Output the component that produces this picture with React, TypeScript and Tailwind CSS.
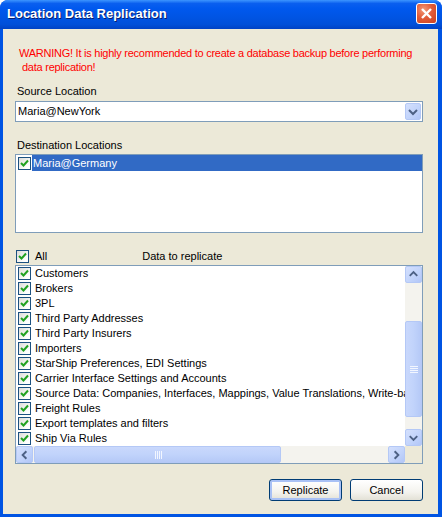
import React from 'react';

const items = [
  'Customers',
  'Brokers',
  '3PL',
  'Third Party Addresses',
  'Third Party Insurers',
  'Importers',
  'StarShip Preferences, EDI Settings',
  'Carrier Interface Settings and Accounts',
  'Source Data: Companies, Interfaces, Mappings, Value Translations, Write-back',
  'Freight Rules',
  'Export templates and filters',
  'Ship Via Rules',
];

function CheckBox() {
  return (
    <span className="w-[13px] h-[13px] shrink-0 border border-[#1c5180] bg-[linear-gradient(135deg,#dcdcd7_0%,#ffffff_80%)] flex items-center justify-center">
      <svg width="9" height="9" viewBox="0 0 9 9">
        <path d="M1 4 L3.5 6.5 L8 1.5" stroke="#21a121" strokeWidth="2" fill="none" />
      </svg>
    </span>
  );
}

function ArrowButton({ dir }: { dir: 'up' | 'down' | 'left' | 'right' }) {
  const paths = {
    up: 'M4 9 L8 5 L12 9',
    down: 'M4 6 L8 10 L12 6',
    left: 'M10 4 L6 8 L10 12',
    right: 'M6 4 L10 8 L6 12',
  };
  return (
    <div className="w-[17px] h-[17px] shrink-0 rounded-[2px] border border-[#b4c8f6] bg-[linear-gradient(135deg,#d4e0fd_0%,#c1d3fb_60%,#b2c6f7_100%)] flex items-center justify-center">
      <svg width="16" height="16" viewBox="0 0 16 16">
        <path d={paths[dir]} stroke="#4d6185" strokeWidth="2" fill="none" />
      </svg>
    </div>
  );
}

export default function App() {
  return (
    <div className="w-[442px] h-[517px] bg-white font-['Liberation_Sans',Arial,sans-serif] text-[11px] text-black">
      <div className="w-full h-full rounded-t-[8px] bg-[#0054e3] flex flex-col overflow-hidden">
        {/* title bar */}
        <div className="h-[29px] shrink-0 flex items-center justify-between pl-[7px] pr-[5px] bg-[linear-gradient(180deg,#3d95ff_0%,#0a5fef_12%,#0058ee_30%,#0054e3_60%,#004fd8_85%,#0042c4_100%)]">
          <span className="text-white font-bold text-[13px] [text-shadow:1px_1px_0_#0a1e6e] -mt-[1px]">
            Location Data Replication
          </span>
          <div className="w-[21px] h-[21px] rounded-[3px] border border-white bg-[radial-gradient(circle_at_35%_30%,#f29a7a_0%,#e25c39_45%,#c8401f_100%)] flex items-center justify-center -mt-[2px]">
            <svg width="13" height="13" viewBox="0 0 13 13">
              <path d="M2 2 L11 11 M11 2 L2 11" stroke="white" strokeWidth="2.4" />
            </svg>
          </div>
        </div>

        {/* client */}
        <div className="flex-1 ml-[3px] mr-[4px] mb-[3px] bg-[#ece9d8] flex flex-col pl-[12px] pr-[15px]">
          <div className="mt-[17px] pl-[4px] text-[#ff0000] leading-[14px] whitespace-nowrap tracking-[-0.25px]">
            <div>WARNING! It is highly recommended to create a database backup before performing</div>
            <div className="pl-[3px]">data replication!</div>
          </div>

          <div className="mt-[10px] pl-[2px] leading-[14px]">Source Location</div>
          <div className="mt-[3px] h-[21px] border border-[#7f9db9] bg-white flex items-center pl-[2px] pr-[1px]">
            <span className="flex-1">Maria@NewYork</span>
            <div className="w-[16px] h-[17px] rounded-[2px] border border-[#b4c8f6] bg-[linear-gradient(135deg,#d4e0fd_0%,#c1d3fb_60%,#b2c6f7_100%)] flex items-center justify-center">
              <svg width="10" height="8" viewBox="0 0 10 8">
                <path d="M1 2 L5 6 L9 2" stroke="#4d6185" strokeWidth="2" fill="none" />
              </svg>
            </div>
          </div>

          <div className="mt-[16px] pl-[2px] leading-[14px]">Destination Locations</div>
          <div className="mt-[2px] h-[79px] border border-[#7f9db9] bg-white">
            <div className="h-[16px] flex items-center pl-[2px]">
              <CheckBox />
              <span className="ml-[1px] flex-1 h-full bg-[#316ac5] text-white pl-[1px] flex items-center">
                Maria@Germany
              </span>
            </div>
          </div>

          <div className="mt-[16px] h-[14px] flex items-center pl-[1px]">
            <CheckBox />
            <span className="ml-[6px]">All</span>
            <span className="ml-[95px]">Data to replicate</span>
          </div>

          <div className="mt-[2px] h-[199px] border border-[#7f9db9] bg-white flex flex-col">
            <div className="flex-1 flex min-h-0">
              <div className="flex-1 min-w-0 overflow-hidden">
                {items.map((item) => (
                  <div key={item} className="h-[15px] flex items-center pl-[2px] whitespace-nowrap">
                    <CheckBox />
                    <span className="ml-[4px]">{item}</span>
                  </div>
                ))}
              </div>
              <div className="w-[17px] bg-[#f4f3ee] flex flex-col">
                <ArrowButton dir="up" />
                <div className="flex-1 flex flex-col pt-[38px] pb-[12px]">
                  <div className="flex-1 rounded-[2px] border border-[#b4c8f6] bg-[linear-gradient(90deg,#c9d8fc_0%,#c1d3fb_50%,#b5c9f7_100%)] flex items-center justify-center">
                    <svg width="8" height="8" viewBox="0 0 8 8">
                      <path d="M0 1.5 H8 M0 3.5 H8 M0 5.5 H8 M0 7.5 H8" stroke="#f2f6ff" strokeWidth="1" />
                    </svg>
                  </div>
                </div>
                <ArrowButton dir="down" />
              </div>
            </div>
            <div className="h-[17px] flex">
              <div className="flex-1 bg-[#f4f3ee] flex">
                <ArrowButton dir="left" />
                <div className="w-[247px] ml-[1px] rounded-[2px] border border-[#b4c8f6] bg-[linear-gradient(180deg,#c9d8fc_0%,#c1d3fb_50%,#b5c9f7_100%)] flex items-center justify-center">
                  <svg width="8" height="8" viewBox="0 0 8 8">
                    <path d="M1.5 0 V8 M3.5 0 V8 M5.5 0 V8 M7.5 0 V8" stroke="#f2f6ff" strokeWidth="1" />
                  </svg>
                </div>
                <div className="flex-1" />
                <ArrowButton dir="right" />
              </div>
              <div className="w-[17px] bg-[#ece9d8]" />
            </div>
          </div>

          <div className="mt-[15px] flex justify-end gap-[8px]">
            <button className="w-[73px] h-[22px] rounded-[3px] border border-[#003c74] bg-[linear-gradient(180deg,#ffffff_0%,#f4f3ee_60%,#e3e1d6_100%)] shadow-[inset_0_0_0_2px_#a9c1f5] flex items-center justify-center">
              Replicate
            </button>
            <button className="w-[73px] h-[22px] rounded-[3px] border border-[#003c74] bg-[linear-gradient(180deg,#ffffff_0%,#f4f3ee_60%,#e3e1d6_100%)] flex items-center justify-center">
              Cancel
            </button>
          </div>
        </div>
      </div>
    </div>
  );
}
